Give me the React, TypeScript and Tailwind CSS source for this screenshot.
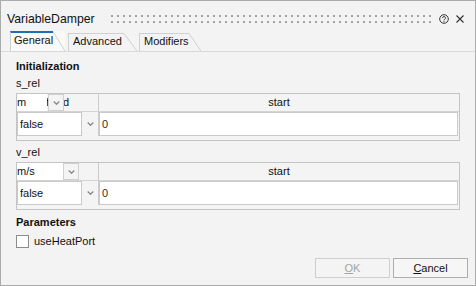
import React from 'react';

const font = { fontFamily: '"Liberation Sans", Arial, sans-serif' };

function Chevron() {
  return (
    <svg width="7" height="4" viewBox="0 0 7 4" className="shrink-0">
      <polyline points="0.7,0.6 3.5,3.2 6.3,0.6" fill="none" stroke="#8a8a8a" strokeWidth="1.4" />
    </svg>
  );
}

function Tab({ label, width, slant, active }: { label: string; width: string; slant: number; active?: boolean }) {
  const h = active ? 20 : 18;
  return (
    <div className={`flex ${active ? 'h-[20px] bg-[#f9f9f9]' : 'h-[18px]'}`}>
      <div
        className={`${width} whitespace-nowrap border-l border-[#d0d0d0] ${
          active ? 'border-t-2 border-t-[#1c6fb0] pl-[3px] pt-[1px]' : 'border-t pl-[4px] pt-[1px]'
        } text-[11px] leading-[13px] text-[#111]`}
      >
        {label}
      </div>
      <svg width={slant} height={h} className="shrink-0">
        <line x1="0" y1="0.5" x2={slant} y2={h} stroke="#d0d0d0" strokeWidth="1" />
      </svg>
    </div>
  );
}

function VarTable({ unit, unitW, gap }: { unit: string; unitW: string; gap: string }) {
  return (
    <div className="border border-[#c4c4c4] bg-[#f4f4f4]">
      {/* header */}
      <div className="flex h-[18px] border-b border-[#d4d4d4]">
        <div className="relative w-[82px] border-r border-[#cccccc]">
          <span className="block text-center text-[11px] leading-[17px]">fixed</span>
          <div className="absolute left-0 top-0 flex h-[17px]">
            <div className={`${unitW} bg-white text-[11px] leading-[17px]`}>{unit}</div>
            <div className={`${gap} flex w-[16px] items-center justify-center border border-[#d0d0d0] bg-[#f4f4f4]`}>
              <Chevron />
            </div>
          </div>
        </div>
        <div className="flex-1 text-center text-[11px] leading-[17px]">start</div>
      </div>
      {/* value row */}
      <div className="flex h-[24px]">
        <div className="flex w-[82px] border-r border-[#cccccc]">
          <div className="w-[65px] border border-[#cacaca] bg-white pl-[2px] pt-[1px] text-[11px] leading-[21px]">false</div>
          <div className="flex flex-1 items-center justify-center">
            <Chevron />
          </div>
        </div>
        <div className="mr-[1px] flex-1 border border-[#cacaca] bg-white pl-[2px] pt-[1px] text-[11px] leading-[21px] text-[#3a2c14]">
          0
        </div>
      </div>
      <div className="h-[4px]" />
    </div>
  );
}

export default function App() {
  return (
    <div
      className="flex h-[286px] w-[476px] flex-col border border-[#ababab] bg-[#f3f3f3] text-[#111]"
      style={font}
    >
      {/* title bar */}
      <div className="flex h-[25px] items-center pl-[6px] pr-[11px] pt-[11px]">
        <span className="text-[12.25px] leading-[14px]">VariableDamper</span>
        <svg className="ml-[16px]" width="322" height="8">
          <defs>
            <pattern id="grip" width="6" height="6" patternUnits="userSpaceOnUse">
              <rect x="0" y="0" width="2" height="2" fill="#a3a3a3" />
            </pattern>
          </defs>
          <rect x="0" y="0" width="322" height="8" fill="url(#grip)" />
        </svg>
        <svg className="ml-[6px]" width="10" height="10" viewBox="0 0 10 10">
          <circle cx="5" cy="5" r="4.3" fill="none" stroke="#333" strokeWidth="1" />
          <path d="M3.6 4 a1.45 1.45 0 1 1 2.1 1.3 c-0.5 0.3 -0.7 0.5 -0.7 1.1" fill="none" stroke="#333" strokeWidth="1" />
          <circle cx="5" cy="7.6" r="0.6" fill="#333" />
        </svg>
        <svg className="ml-[7px]" width="8" height="8" viewBox="0 0 8 8">
          <path d="M0.5 0.5 L7.5 7.5 M7.5 0.5 L0.5 7.5" stroke="#333" strokeWidth="1.1" />
        </svg>
      </div>

      {/* tabs */}
      <div className="mt-[5px] flex h-[21px] items-end border-b border-[#d9d9d9] pl-[9px]">
        <Tab label="General" width="w-[43px]" slant={12} active />
        <div className="ml-[3px]">
          <Tab label="Advanced" width="w-[56px]" slant={13} />
        </div>
        <div className="ml-[2px]">
          <Tab label="Modifiers" width="w-[50px]" slant={12} />
        </div>
      </div>

      {/* content */}
      <div className="flex flex-1 flex-col px-[15px] pt-[8px] text-[11px] leading-[13px]">
        <div className="font-bold">Initialization</div>
        <div className="mt-[4px]">s_rel</div>
        <div className="mt-[3px]">
          <VarTable unit="m" unitW="w-[30px]" gap="ml-[1px]" />
        </div>
        <div className="mt-[5px]">v_rel</div>
        <div className="mt-[3px]">
          <VarTable unit="m/s" unitW="w-[46px]" gap="ml-0" />
        </div>
        <div className="mt-[6px] font-bold">Parameters</div>
        <div className="mt-[6px] flex items-center">
          <div className="h-[13px] w-[13px] border border-[#8c8c8c] bg-white" />
          <span className="ml-[5px]">useHeatPort</span>
        </div>
      </div>

      {/* buttons */}
      <div className="flex justify-end gap-[3px] pb-[7px] pr-[7px]">
        <button className="h-[20px] w-[75px] border border-[#cfcfcf] bg-[#f4f4f4] text-[11px] text-[#a3a3a3]">
          <span className="underline">O</span>K
        </button>
        <button className="h-[20px] w-[75px] border border-[#adadad] bg-[#f6f6f6] text-[11px] text-[#111]">
          <span className="underline">C</span>ancel
        </button>
      </div>
    </div>
  );
}
